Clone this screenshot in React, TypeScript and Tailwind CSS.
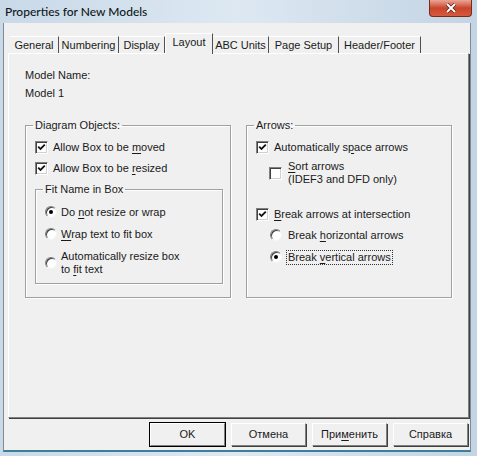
import React from 'react';

const font = { fontFamily: '"Liberation Sans", Arial, sans-serif' };

// tab widths measured off the reference strip
const tabs: [string, number][] = [
  ['General', 49],
  ['Numbering', 60],
  ['Display', 46],
  ['Layout', 48],
  ['ABC Units', 56],
  ['Page Setup', 70],
  ['Header/Footer', 82],
];

const CheckBox = ({ checked }: { checked?: boolean }) => (
  <span className="relative inline-block w-[13px] h-[13px] shrink-0 border border-t-[#808080] border-l-[#808080] border-b-white border-r-white bg-white shadow-[inset_1px_1px_0_#404040,inset_-1px_-1px_0_#d4d0c8]">
    {checked && (
      <svg className="absolute left-[1px] top-[1px]" width="9" height="9" viewBox="0 0 9 9">
        <path d="M1.2 3.6 L3.5 6 L7.8 1.6" stroke="#111" strokeWidth="1.8" fill="none" />
      </svg>
    )}
  </span>
);

const Radio = ({ checked }: { checked?: boolean }) => (
  <span className="relative inline-block w-[12px] h-[12px] shrink-0 rounded-full bg-white border border-t-[#808080] border-l-[#808080] border-b-[#f4f4f4] border-r-[#f4f4f4] shadow-[inset_1px_1px_0_#404040]">
    {checked && <span className="absolute left-[3px] top-[3px] w-[4px] h-[4px] rounded-full bg-black" />}
  </span>
);

const Group = ({ title, className, children }: { title: string; className: string; children: React.ReactNode }) => (
  <fieldset className={`border border-[#a0a0a0] shadow-[1px_1px_0_white,inset_1px_1px_0_white] ${className}`}>
    <legend className="ml-[7px] px-[2px] leading-[13px]">{title}</legend>
    {children}
  </fieldset>
);

const U = ({ children }: { children: React.ReactNode }) => <span className="underline underline-offset-2">{children}</span>;

const App = () => {
  return (
    <div className="w-[477px] h-[456px] bg-gradient-to-r from-[#c9d9e8] via-[#dde8f2] to-[#c3d4e4] flex flex-col text-[11px] leading-[13px] text-[#1a1a1a]" style={font}>
      <div className="h-[23px] flex items-start justify-between pl-[5px]">
        <span className="mt-[5px] text-[12px] text-[#101820]" style={{ fontFamily: 'Lato, sans-serif', fontWeight: 500 }}>Properties for New Models</span>
        <div className="mr-[5px] w-[43px] h-[17px] rounded-b-[4px] bg-gradient-to-b from-[#eaa596] via-[#c8452c] to-[#d65a3e] border border-[#7a2a1a] border-t-0 flex items-center justify-center">
          <svg width="12" height="10" viewBox="0 0 12 10">
            <path d="M2 1 L10 9 M10 1 L2 9" stroke="#5a1a10" strokeWidth="3.4" />
            <path d="M2 1 L10 9 M10 1 L2 9" stroke="white" strokeWidth="2" />
          </svg>
        </div>
      </div>
      <div className="ml-[3px] mr-[6px] h-[429px] bg-[#f0f0f0] border-l border-[#808a94] border-r border-b-[2px] border-b-[#3d7f99] flex flex-col">
        <div className="flex items-end h-[30px] pl-[6px]">
          {tabs.map(([t, w]) =>
            t === 'Layout' ? (
              <div
                key={t}
                style={{ width: w }}
                className="h-[21px] bg-[#f0f0f0] border-l border-l-white border-t border-t-white border-r border-r-[#505050] -mb-[1px] relative z-10 pt-[2px] text-center"
              >
                {t}
              </div>
            ) : (
              <div
                key={t}
                style={{ width: w }}
                className="h-[17px] border-t border-t-white border-r border-r-[#505050] pt-[2px] text-center"
              >
                {t}
              </div>
            )
          )}
        </div>
        <div className="ml-[4px] mr-[1px] h-[365px] border border-t-white border-l-white border-r-[#808080] border-b-[#808080] shadow-[1px_1px_0_#404040] flex flex-col">
          <div className="pl-[16px] pt-[15px]">Model Name:</div>
          <div className="pl-[16px] pt-[5px]">Model 1</div>
          <div className="flex pl-[16px] pt-[19px] gap-[15px]">
            <Group title="Diagram Objects:" className="w-[206px] h-[179px]">
              <div className="pl-[9px]">
                <div className="flex items-center gap-[5px] h-[16px] mt-[7px]">
                  <CheckBox checked />
                  <span>Allow Box to be <U>m</U>oved</span>
                </div>
                <div className="flex items-center gap-[5px] h-[16px] mt-[5px]">
                  <CheckBox checked />
                  <span>Allow Box to be <U>r</U>esized</span>
                </div>
                <Group title="Fit Name in Box" className="mt-[7px] w-[188px] h-[101px]">
                  <div className="pl-[9px]">
                    <div className="flex items-center gap-[4px] h-[16px] mt-[8px]">
                      <Radio checked />
                      <span>Do <U>n</U>ot resize or wrap</span>
                    </div>
                    <div className="flex items-center gap-[4px] h-[16px] mt-[6px]">
                      <Radio />
                      <span><U>W</U>rap text to fit box</span>
                    </div>
                    <div className="flex items-center gap-[4px] mt-[8px]">
                      <Radio />
                      <span>Automatically resize box<br />to <U>f</U>it text</span>
                    </div>
                  </div>
                </Group>
              </div>
            </Group>
            <Group title="Arrows:" className="w-[206px] h-[179px]">
              <div className="pl-[9px]">
                <div className="flex items-center gap-[5px] h-[16px] mt-[7px]">
                  <CheckBox checked />
                  <span>Automatically s<U>p</U>ace arrows</span>
                </div>
                <div className="flex items-center gap-[6px] mt-[5px] ml-[13px]">
                  <CheckBox />
                  <span><U>S</U>ort arrows<br />(IDEF3 and DFD only)</span>
                </div>
                <div className="flex items-center gap-[5px] h-[16px] mt-[20px]">
                  <CheckBox checked />
                  <span><U>B</U>reak arrows at intersection</span>
                </div>
                <div className="flex items-center gap-[6px] h-[16px] mt-[5px] ml-[14px]">
                  <Radio />
                  <span>Break <U>h</U>orizontal arrows</span>
                </div>
                <div className="flex items-center gap-[5px] h-[16px] mt-[6px] ml-[14px]">
                  <Radio checked />
                  <span className="outline outline-1 outline-dotted outline-[#333] px-[1px]">Break <U>v</U>ertical arrows</span>
                </div>
              </div>
            </Group>
          </div>
        </div>
        <div className="flex justify-end gap-[6px] pr-[2px] pt-[5px]">
          {['OK', 'Отмена', 'Применить', 'Справка'].map((b) => (
            <div
              key={b}
              className={`w-[75px] h-[23px] flex items-center justify-center bg-[#f0f0f0] border border-t-white border-l-white border-r-[#808080] border-b-[#808080] ${b === 'OK' ? 'outline outline-1 outline-black' : 'shadow-[1px_1px_0_#404040]'}`}
            >
              {b === 'Применить' ? <span>При<U>м</U>енить</span> : b}
            </div>
          ))}
        </div>
      </div>
    </div>
  );
};

export default App;
